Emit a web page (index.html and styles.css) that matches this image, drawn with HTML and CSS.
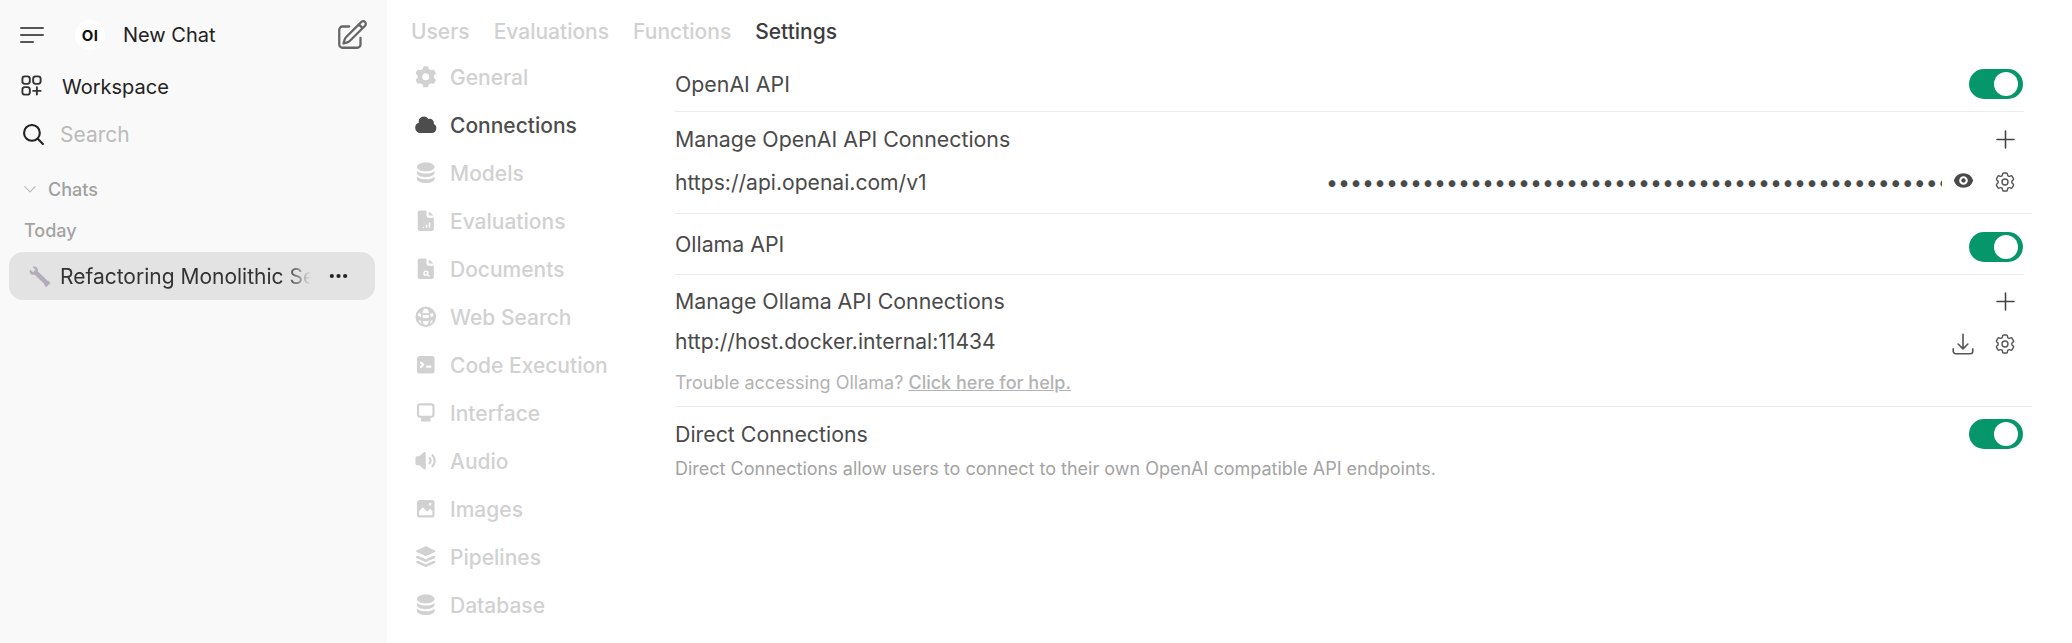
FILE: index.html
```html
<!DOCTYPE html>
<html lang="en">
<head>
<meta charset="utf-8">
<title>Admin Settings</title>
<link rel="stylesheet" href="styles.css">
</head>
<body>
<div class="app">
  <aside class="sidebar">
    <div class="side-top">
      <svg class="i-menu" viewBox="0 0 24 24" fill="none" stroke="currentColor" stroke-width="2" stroke-linecap="round"><path d="M1 5h22M1 12h22M1 19h12"/></svg>
      <span class="logo">OI</span>
      <span class="new-chat">New Chat</span>
      <svg class="i-new" viewBox="0 0 24 24" fill="none" stroke="currentColor" stroke-width="1.600" stroke-linecap="round" stroke-linejoin="round"><path d="m16.862 4.487 1.687-1.688a1.875 1.875 0 1 1 2.652 2.652L10.582 16.070a4.500 4.500 0 0 1-1.897 1.130L6 18l.8-2.685a4.500 4.500 0 0 1 1.130-1.897l8.932-8.931Zm0 0L19.500 7.125M18 14v4.750A2.250 2.250 0 0 1 15.750 21H5.250A2.250 2.250 0 0 1 3 18.750V8.250A2.250 2.250 0 0 1 5.250 6H10"/></svg>
    </div>
    <div class="side-workspace">
      <svg class="i-work" viewBox="2.500 2.500 19 19" fill="none" stroke="currentColor" stroke-width="1.700" stroke-linecap="round" stroke-linejoin="round"><path d="M13.500 16.875h3.375m0 0h3.375m-3.375 0V13.500m0 3.375v3.375M6 10.500h2.250a2.250 2.250 0 0 0 2.250-2.250V6a2.250 2.250 0 0 0-2.250-2.250H6A2.250 2.250 0 0 0 3.750 6v2.250A2.250 2.250 0 0 0 6 10.500Zm0 9.750h2.250A2.250 2.250 0 0 0 10.500 18v-2.250a2.250 2.250 0 0 0-2.250-2.250H6a2.250 2.250 0 0 0-2.250 2.250V18A2.250 2.250 0 0 0 6 20.250Zm9.750-9.750H18a2.250 2.250 0 0 0 2.250-2.250V6A2.250 2.250 0 0 0 18 3.750h-2.250A2.250 2.250 0 0 0 13.500 6v2.250a2.250 2.250 0 0 0 2.250 2.250Z"/></svg>
      <span>Workspace</span>
    </div>
    <div class="side-search">
      <svg class="i-search" viewBox="2 2 20 20" fill="none" stroke="currentColor" stroke-width="2" stroke-linecap="round" stroke-linejoin="round"><path d="m21 21-5.197-5.197m0 0A7.500 7.500 0 1 0 5.196 5.196a7.500 7.500 0 0 0 10.607 10.607Z"/></svg>
      <span>Search</span>
    </div>
    <div class="side-chats">
      <svg class="i-chev" viewBox="0 0 24 24" fill="none" stroke="currentColor" stroke-width="2" stroke-linecap="round" stroke-linejoin="round"><path d="m3 8 9 9 9-9"/></svg>
      <span>Chats</span>
    </div>
    <div class="side-today">Today</div>
    <div class="chat-item">
      <svg class="i-wrench" viewBox="0 0 24 24"><path d="M2.200 4.600 5.300 7.600 7.800 5 4.700 2C7 .8 9.600 2 10.200 4.300c.2.800.1 1.500-.1 2.200l10.300 10 .6-.2 2.400 2.500-4.300 4.300-2.400-2.500.3-.7L6.700 10c-.7.2-1.500.3-2.300.1C2 9.400 1 6.800 2.200 4.600Z"/></svg>
      <span class="chat-title">Refactoring Monolithic Server</span>
      <svg class="i-dots" viewBox="0 0 20 6" fill="currentColor"><circle cx="3" cy="3" r="2.200"/><circle cx="10" cy="3" r="2.200"/><circle cx="17" cy="3" r="2.200"/></svg>
    </div>
  </aside>

  <main class="main">
    <nav class="tabs">
      <span class="tab">Users</span>
      <span class="tab">Evaluations</span>
      <span class="tab">Functions</span>
      <span class="tab tab-on">Settings</span>
    </nav>
    <div class="panes">
      <ul class="nav">
        <li class="nav-item"><svg viewBox="0 0 20 20" fill="currentColor"><path fill-rule="evenodd" d="M7.840 1.804A1 1 0 0 1 8.820 1h2.360a1 1 0 0 1 .98.804l.331 1.652a6.993 6.993 0 0 1 1.929 1.115l1.598-.54a1 1 0 0 1 1.186.447l1.180 2.044a1 1 0 0 1-.205 1.251l-1.267 1.113a7.047 7.047 0 0 1 0 2.228l1.267 1.113a1 1 0 0 1 .206 1.250l-1.180 2.045a1 1 0 0 1-1.187.447l-1.598-.54a6.993 6.993 0 0 1-1.929 1.115l-.33 1.652a1 1 0 0 1-.98.804H8.820a1 1 0 0 1-.98-.804l-.331-1.652a6.993 6.993 0 0 1-1.929-1.115l-1.598.54a1 1 0 0 1-1.186-.447l-1.180-2.044a1 1 0 0 1 .205-1.251l1.267-1.114a7.050 7.050 0 0 1 0-2.227L1.821 7.773a1 1 0 0 1-.206-1.250l1.180-2.045a1 1 0 0 1 1.187-.447l1.598.54A6.992 6.992 0 0 1 7.510 3.456l.33-1.652ZM10 13a3 3 0 1 0 0-6 3 3 0 0 0 0 6Z" clip-rule="evenodd"/></svg>General</li>
        <li class="nav-item nav-on"><svg viewBox="0 0 20 20" fill="currentColor"><path d="M1 12.500A4.500 4.500 0 0 0 5.500 17H15a4 4 0 0 0 1.866-7.539 3.504 3.504 0 0 0-4.504-4.272A4.500 4.500 0 0 0 4.060 8.235 4.502 4.502 0 0 0 1 12.500Z"/></svg>Connections</li>
        <li class="nav-item"><svg viewBox="0 0 16 16" fill="currentColor"><path d="M8 7c3.314 0 6-1.343 6-3s-2.686-3-6-3-6 1.343-6 3 2.686 3 6 3Z"/><path d="M8 8.500c1.840 0 3.579-.37 4.914-1.037A6.330 6.330 0 0 0 14 6.790V8c0 1.657-2.686 3-6 3S2 9.657 2 8V6.790c.320.260.686.484 1.086.673C4.421 8.130 6.160 8.500 8 8.500Z"/><path d="M8 12.500c1.840 0 3.579-.37 4.914-1.037.4-.189.766-.413 1.086-.673V12c0 1.657-2.686 3-6 3s-6-1.343-6-3v-1.210c.32.260.686.484 1.086.673C4.421 12.130 6.160 12.500 8 12.500Z"/></svg>Models</li>
        <li class="nav-item"><svg viewBox="0 0 16 16" fill="currentColor"><path fill-rule="evenodd" d="M4 1a1.500 1.500 0 0 0-1.500 1.500v11A1.500 1.500 0 0 0 4 15h8a1.500 1.500 0 0 0 1.500-1.500V6h-3A2 2 0 0 1 8.500 4V1H4Zm6 .5V4a.5.500 0 0 0 .5.500h2.800L10 1.500ZM6 12.500a.5.500 0 0 1 1 0 .5.500 0 0 1-1 0Zm2-1.500a.5.500 0 0 1 1 0v1.500a.5.500 0 0 1-1 0V11Zm2-1.500a.5.500 0 0 1 1 0v3a.5.500 0 0 1-1 0v-3Z" clip-rule="evenodd"/></svg>Evaluations</li>
        <li class="nav-item"><svg viewBox="0 0 16 16" fill="currentColor"><path fill-rule="evenodd" d="M4 1a1.500 1.500 0 0 0-1.500 1.500v11A1.500 1.500 0 0 0 4 15h8a1.500 1.500 0 0 0 1.500-1.500V6h-3A2 2 0 0 1 8.500 4V1H4Zm6 .5V4a.5.500 0 0 0 .5.500h2.800L10 1.500ZM8 12.800a1.800 1.800 0 0 0 1-.3l.9.9a.5.500 0 0 0 .7-.7l-.9-.9A1.800 1.800 0 1 0 8 12.800Zm0-1a.8.8 0 1 0 0-1.600.8.8 0 0 0 0 1.600Z" clip-rule="evenodd"/></svg>Documents</li>
        <li class="nav-item"><svg viewBox="0 0 16 16" fill="currentColor"><path fill-rule="evenodd" d="M8 1a7 7 0 1 0 0 14A7 7 0 0 0 8 1ZM6.900 2.700c-.5.700-.9 1.600-1.200 2.700.7.200 1.500.3 2.300.3s1.600-.1 2.300-.3c-.3-1.100-.7-2-1.200-2.700-.4-.1-.7-.2-1.100-.2s-.7.1-1.100.2ZM2.600 7.200c.6.500 1.300.8 2 1.100.1-.8.200-1.500.4-2.100-.7-.3-1.200-.6-1.700-1-.3.600-.6 1.300-.7 2Zm3.500-.6c-.1.700-.2 1.400-.2 2.100.7.200 1.400.300 2.100.300s1.400-.1 2.100-.300c0-.7-.1-1.400-.2-2.100-.6.100-1.300.2-1.900.2s-1.300-.1-1.900-.2Zm4.900-.4c.2.600.3 1.300.4 2.100.7-.3 1.400-.6 2-1.100-.1-.7-.4-1.400-.7-2-.5.4-1 .7-1.700 1ZM3.100 10.600c.4 1 1.100 1.700 2 2.300-.2-.7-.4-1.500-.5-2.300l-1.500 0Zm2.800.2c.1.800.300 1.700.7 2.400.5.2.9.3 1.400.3s.9-.1 1.400-.3c.4-.7.600-1.600.7-2.400-1.400.3-2.800.3-4.200 0Zm5.500-.2c-.1.800-.3 1.600-.5 2.300.9-.6 1.600-1.300 2-2.300h-1.500Z" clip-rule="evenodd"/></svg>Web Search</li>
        <li class="nav-item"><svg viewBox="0 0 16 16" fill="currentColor"><path fill-rule="evenodd" d="M2 4a2 2 0 0 1 2-2h8a2 2 0 0 1 2 2v8a2 2 0 0 1-2 2H4a2 2 0 0 1-2-2V4Zm2.220 1.970a.750.750 0 0 0 0 1.060l.970.970-.970.970a.750.750 0 1 0 1.060 1.060l1.500-1.500a.750.750 0 0 0 0-1.060l-1.500-1.500a.750.750 0 0 0-1.060 0ZM8.750 8.500a.750.750 0 0 0 0 1.500h2.500a.750.750 0 0 0 0-1.500h-2.500Z" clip-rule="evenodd"/></svg>Code Execution</li>
        <li class="nav-item"><svg viewBox="0 0 16 16" fill="currentColor"><path fill-rule="evenodd" d="M2 3.750A2.250 2.250 0 0 1 4.250 1.500h7.500A2.250 2.250 0 0 1 14 3.750v5.500a2.250 2.250 0 0 1-2.250 2.250H11c0 .5.100.9.300 1.200.2.300.2 1.300-.6 1.300H5.300c-.8 0-.8-1-.6-1.300.2-.3.3-.7.300-1.200h-.75A2.250 2.250 0 0 1 2 9.250v-5.500Zm2.250-.750a.75.75 0 0 0-.75.750v5.500c0 .414.336.750.750.750h7.500a.75.75 0 0 0 .75-.750v-5.500a.75.75 0 0 0-.75-.750h-7.500Z" clip-rule="evenodd"/></svg>Interface</li>
        <li class="nav-item"><svg viewBox="0 0 16 16" fill="currentColor"><path d="M7.557 2.066A.75.75 0 0 1 8 2.750v10.500a.75.75 0 0 1-1.248.560L3.590 11H2a1 1 0 0 1-1-1V6a1 1 0 0 1 1-1h1.590l3.162-2.810a.75.75 0 0 1 .805-.124ZM12.100 3.750a.75.75 0 0 1 1.060 0 6.250 6.250 0 0 1 0 8.500.75.75 0 1 1-1.060-1.060 4.750 4.750 0 0 0 0-6.380.75.75 0 0 1 0-1.060ZM10.100 5.750a.75.75 0 0 1 1.060 0 3.250 3.250 0 0 1 0 4.500.75.75 0 1 1-1.060-1.060 1.750 1.750 0 0 0 0-2.380.75.75 0 0 1 0-1.060Z"/></svg>Audio</li>
        <li class="nav-item"><svg viewBox="0 0 16 16" fill="currentColor"><path fill-rule="evenodd" d="M2 4a2 2 0 0 1 2-2h8a2 2 0 0 1 2 2v8a2 2 0 0 1-2 2H4a2 2 0 0 1-2-2V4Zm10.500 5.707a.5.500 0 0 0-.146-.353l-1-1a.5.500 0 0 0-.708 0L9.354 9.646a.5.500 0 0 1-.708 0L6.354 7.354a.5.500 0 0 0-.708 0l-2 2a.5.500 0 0 0-.146.353V12a.5.500 0 0 0 .5.500h8a.5.500 0 0 0 .5-.5V9.707ZM12 5a1 1 0 1 1-2 0 1 1 0 0 1 2 0Z" clip-rule="evenodd"/></svg>Images</li>
        <li class="nav-item"><svg viewBox="0 0 20 20" fill="currentColor"><path d="M9.680 1.100a.75.75 0 0 1 .640 0l7.500 3.500a.75.75 0 0 1 0 1.360l-7.500 3.500a.75.75 0 0 1-.640 0l-7.500-3.500a.75.75 0 0 1 0-1.360l7.500-3.500Z"/><path d="m3.400 9.100 6 2.800a1.500 1.500 0 0 0 1.200 0l6-2.800 1.220.570a.75.75 0 0 1 0 1.360l-7.500 3.500a.75.75 0 0 1-.640 0l-7.500-3.500a.75.75 0 0 1 0-1.360L3.400 9.100Z"/><path d="m3.400 13.300 6 2.800a1.500 1.500 0 0 0 1.200 0l6-2.800 1.220.570a.75.75 0 0 1 0 1.360l-7.500 3.500a.75.75 0 0 1-.640 0l-7.500-3.500a.75.75 0 0 1 0-1.360l1.220-.570Z"/></svg>Pipelines</li>
        <li class="nav-item"><svg viewBox="0 0 16 16" fill="currentColor"><path d="M8 7c3.314 0 6-1.343 6-3s-2.686-3-6-3-6 1.343-6 3 2.686 3 6 3Z"/><path d="M8 8.500c1.840 0 3.579-.37 4.914-1.037A6.330 6.330 0 0 0 14 6.790V8c0 1.657-2.686 3-6 3S2 9.657 2 8V6.790c.320.260.686.484 1.086.673C4.421 8.130 6.160 8.500 8 8.500Z"/><path d="M8 12.500c1.840 0 3.579-.37 4.914-1.037.4-.189.766-.413 1.086-.673V12c0 1.657-2.686 3-6 3s-6-1.343-6-3v-1.210c.32.260.686.484 1.086.673C4.421 12.130 6.160 12.500 8 12.500Z"/></svg>Database</li>
      </ul>

      <section class="content">
        <div class="row row-a">
          <span class="label">OpenAI API</span>
          <span class="toggle"><span class="knob"></span></span>
        </div>
        <hr class="rule rule-short">
        <div class="row row-b">
          <span class="label">Manage OpenAI API Connections</span>
          <svg class="i-plus" viewBox="0 0 16 16" fill="none" stroke="currentColor" stroke-width="1.200" stroke-linecap="round"><path d="M8 1.500v13M1.500 8h13"/></svg>
        </div>
        <div class="row row-c">
          <input class="url" type="text" value="https://api.openai.com/v1" aria-label="API URL">
          <input class="key" type="password" value="sk-proj-aaaaaaaaaaaaaaaaaaaaaaaaaaaaaaaaaaaaaaaaaaaaaaaaaaaaaaaaaaaaaaaaaaaaaaaa" aria-label="API key">
          <svg class="i-eye" viewBox="0 0 16 16" fill="currentColor"><path d="M8 9.500a1.500 1.500 0 1 0 0-3 1.500 1.500 0 0 0 0 3Z"/><path fill-rule="evenodd" d="M1.380 8.280a.87.87 0 0 1 0-.566 7.003 7.003 0 0 1 13.238.006.87.87 0 0 1 0 .566A7.003 7.003 0 0 1 1.379 8.280ZM11 8a3 3 0 1 1-6 0 3 3 0 0 1 6 0Z" clip-rule="evenodd"/></svg>
          <svg class="i-cog" viewBox="0 0 24 24" fill="none" stroke="currentColor" stroke-width="1.400" stroke-linecap="round" stroke-linejoin="round"><path d="M9.594 3.940c.09-.542.56-.94 1.110-.94h2.593c.55 0 1.020.398 1.110.94l.213 1.281c.063.374.313.686.645.870.074.040.147.083.22.127.325.196.72.257 1.075.124l1.217-.456a1.125 1.125 0 0 1 1.370.490l1.296 2.247a1.125 1.125 0 0 1-.26 1.431l-1.003.827c-.293.241-.438.613-.43.992a7.723 7.723 0 0 1 0 .255c-.008.378.137.750.43.991l1.004.827c.424.350.534.955.26 1.430l-1.298 2.247a1.125 1.125 0 0 1-1.369.491l-1.217-.456c-.355-.133-.75-.072-1.076.124a6.470 6.470 0 0 1-.22.128c-.331.183-.581.495-.644.869l-.213 1.281c-.09.543-.56.940-1.110.940h-2.594c-.55 0-1.019-.398-1.110-.940l-.213-1.281c-.062-.374-.312-.686-.644-.870a6.520 6.520 0 0 1-.22-.127c-.325-.196-.72-.257-1.076-.124l-1.217.456a1.125 1.125 0 0 1-1.369-.490l-1.297-2.247a1.125 1.125 0 0 1 .26-1.431l1.004-.827c.292-.240.437-.613.430-.991a6.932 6.932 0 0 1 0-.255c.007-.380-.138-.751-.43-.992l-1.004-.827a1.125 1.125 0 0 1-.26-1.430l1.297-2.247a1.125 1.125 0 0 1 1.370-.491l1.216.456c.356.133.751.072 1.076-.124.072-.044.146-.086.22-.128.332-.183.582-.495.644-.869l.214-1.280Z"/><path d="M15 12a3 3 0 1 1-6 0 3 3 0 0 1 6 0Z"/></svg>
        </div>
        <hr class="rule">
        <div class="row row-d">
          <span class="label label-up">Ollama API</span>
          <span class="toggle"><span class="knob"></span></span>
        </div>
        <hr class="rule rule-short">
        <div class="row row-e">
          <span class="label">Manage Ollama API Connections</span>
          <svg class="i-plus" viewBox="0 0 16 16" fill="none" stroke="currentColor" stroke-width="1.200" stroke-linecap="round"><path d="M8 1.500v13M1.500 8h13"/></svg>
        </div>
        <div class="row row-f">
          <input class="url url-wide" type="text" value="http://host.docker.internal:11434" aria-label="Ollama URL">
          <svg class="i-tray" viewBox="0 0 24 24" fill="none" stroke="currentColor" stroke-width="1.500" stroke-linecap="round" stroke-linejoin="round"><path d="M3 16.500v2.250A2.250 2.250 0 0 0 5.250 21h13.500A2.250 2.250 0 0 0 21 18.750V16.500M16.500 12 12 16.500m0 0L7.500 12m4.500 4.500V3"/></svg>
          <svg class="i-cog i-cog-near" viewBox="0 0 24 24" fill="none" stroke="currentColor" stroke-width="1.400" stroke-linecap="round" stroke-linejoin="round"><path d="M9.594 3.940c.09-.542.56-.94 1.110-.94h2.593c.55 0 1.020.398 1.110.94l.213 1.281c.063.374.313.686.645.870.074.040.147.083.22.127.325.196.72.257 1.075.124l1.217-.456a1.125 1.125 0 0 1 1.370.490l1.296 2.247a1.125 1.125 0 0 1-.26 1.431l-1.003.827c-.293.241-.438.613-.43.992a7.723 7.723 0 0 1 0 .255c-.008.378.137.750.43.991l1.004.827c.424.350.534.955.26 1.430l-1.298 2.247a1.125 1.125 0 0 1-1.369.491l-1.217-.456c-.355-.133-.75-.072-1.076.124a6.470 6.470 0 0 1-.22.128c-.331.183-.581.495-.644.869l-.213 1.281c-.09.543-.56.940-1.110.940h-2.594c-.55 0-1.019-.398-1.110-.940l-.213-1.281c-.062-.374-.312-.686-.644-.870a6.520 6.520 0 0 1-.22-.127c-.325-.196-.72-.257-1.076-.124l-1.217.456a1.125 1.125 0 0 1-1.369-.490l-1.297-2.247a1.125 1.125 0 0 1 .26-1.431l1.004-.827c.292-.240.437-.613.430-.991a6.932 6.932 0 0 1 0-.255c.007-.380-.138-.751-.43-.992l-1.004-.827a1.125 1.125 0 0 1-.26-1.430l1.297-2.247a1.125 1.125 0 0 1 1.370-.491l1.216.456c.356.133.751.072 1.076-.124.072-.044.146-.086.22-.128.332-.183.582-.495.644-.869l.214-1.280Z"/><path d="M15 12a3 3 0 1 1-6 0 3 3 0 0 1 6 0Z"/></svg>
        </div>
        <div class="row row-g">
          <span class="hint">Trouble accessing Ollama? <a class="help" href="#">Click here for help.</a></span>
        </div>
        <hr class="rule">
        <div class="row row-h">
          <span class="label">Direct Connections</span>
          <span class="toggle"><span class="knob"></span></span>
        </div>
        <div class="row row-i">
          <span class="desc">Direct Connections allow users to connect to their own OpenAI compatible API endpoints.</span>
        </div>
      </section>
    </div>
  </main>
</div>
</body>
</html>
```

FILE: styles.css
```css
* { box-sizing: border-box; }
html, body { margin: 0; height: 100%; }
body {
  font-family: Inter, "Liberation Sans", sans-serif;
  font-size: 21.33px;
  color: #4a4a4a;
  background: #fff;
  overflow: hidden;
}
.app { display: flex; height: 643px; }

/* sidebar */
.sidebar {
  width: 387px;
  flex: none;
  background: #f9f9f9;
  display: flex;
  flex-direction: column;
}
.side-top { display: flex; align-items: center; height: 70px; padding: 0 18px 0 20px; flex: none; }
.i-menu { width: 24px; height: 24px; color: #555; flex: none; }
.logo {
  width: 30px; height: 30px; margin-left: 31px; flex: none;
  border-radius: 50%; background: #fff; color: #111;
  display: flex; align-items: center; justify-content: center;
  font-size: 15px; font-weight: 700; letter-spacing: .4px;
}
.new-chat { margin-left: 18px; color: #222; font-size: 20px; font-weight: 400; flex: 1; }
.i-new { width: 34px; height: 34px; color: #666; flex: none; }
.side-workspace { display: flex; align-items: center; height: 34px; padding-left: 21px; color: #222; font-size: 20px; font-weight: 400; flex: none; }
.i-work { width: 21px; height: 21px; margin-right: 20px; color: #333; position: relative; top: -2px; }
.side-search { display: flex; align-items: center; height: 60px; padding-left: 23px; color: #bbb; flex: none; font-size: 21px; }
.i-search { width: 21px; height: 21px; margin-right: 16px; color: #222; }
.side-chats { display: flex; align-items: center; height: 50px; padding-left: 23px; font-size: 18px; font-weight: 500; color: #a0a0a0; flex: none; }
.i-chev { width: 14px; height: 14px; margin-right: 11px; color: #bbb; }
.side-today { height: 28px; line-height: 28px; margin-top: 3px; padding-left: 24px; font-size: 18px; font-weight: 500; color: #a3a3a3; flex: none; }
.chat-item {
  display: flex; align-items: center;
  margin: 7px 12px 0 9px; height: 48px; flex: none;
  padding: 0 27px 0 19px;
  border-radius: 14px;
  background: #e3e3e3;
  color: #333;
}
.i-wrench { width: 23px; height: 23px; margin-right: 9px; flex: none; fill: #b3adba; }
.chat-title {
  flex: 1; min-width: 0; white-space: nowrap; overflow: hidden; margin-right: 18px; font-size: 21px;
  -webkit-mask-image: linear-gradient(to right, #000 90%, transparent 100%);
  mask-image: linear-gradient(to right, #000 90%, transparent 100%);
}
.i-dots { width: 19px; height: 6px; flex: none; color: #222; }

/* main */
.main { flex: 1; min-width: 0; display: flex; flex-direction: column; padding: 0 40px 0 24px; }
.tabs { display: flex; gap: 24px; height: 56px; padding: 20px 0 0 0; flex: none; font-size: 21px; font-weight: 500; }
.tab { color: #d1d1d1; line-height: 24px; }
.tab-on { color: #3d3d3d; }
.panes { display: flex; flex: 1; min-height: 0; }
.nav { list-style: none; margin: -3px 0 0; padding: 0; width: 264px; flex: none; }
.nav-item { display: flex; align-items: center; height: 48px; padding-left: 3px; color: #d1d1d1; font-size: 21px; font-weight: 500; }
.nav-item svg { width: 23.500px; height: 23.500px; margin-right: 12.500px; flex: none; }
.nav-on { color: #4d4d4d; }

.content { flex: 1; min-width: 0; }
.row { display: flex; align-items: center; justify-content: space-between; }
.label { color: #4a4a4a; font-weight: 400; }
.label-up { position: relative; top: -3px; }
.row-a { height: 54px; padding-right: 9px; margin-top: 1px; }
.row-b { height: 54px; padding-right: 16px; }
.row-c { height: 47px; padding: 3px 15px 0 0; align-items: flex-start; }
.row-d { height: 60px; padding: 6px 9px 0 0; }
.row-e { height: 52px; padding-right: 16px; }
.row-f { height: 34px; padding-right: 15px; }
.row-f .url { margin-top: -6px; }
.row-g { height: 45px; padding-bottom: 3px; }
.row-h { height: 54px; padding-right: 9px; }
.row-i { height: 20px; margin-top: -3px; }
.rule { height: 1px; border: 0; margin: 0; background: #ececec; }
.rule-short { margin-right: 8px; }
.toggle { width: 54px; height: 30px; border-radius: 15px; background: #059669; display: flex; align-items: center; justify-content: flex-end; padding-right: 5px; flex: none; }
.knob { width: 24px; height: 24px; border-radius: 50%; background: #fff; }
.i-plus { width: 21px; height: 21px; color: #444; flex: none; }
.url, .key {
  border: 0; outline: 0; background: transparent; padding: 0; margin: 0;
  font: inherit; color: #4a4a4a; height: 26px; min-width: 0;
}
.url { width: 651px; flex: none; font-size: 21.100px; }
.url-wide { flex: 1; width: auto; }
.key { flex: 1; }
.i-eye { width: 23px; height: 23px; margin-left: 10px; color: #4a4a4a; flex: none; }
.i-tray { width: 26px; height: 26px; color: #555; flex: none; }
.i-cog { width: 24px; height: 24px; margin-left: 18px; margin-top: 1px; color: #555; flex: none; }
.i-cog-near { margin: 0 0 0 17px; }
.hint { font-size: 18px; color: #b3b3b3; }
.help { color: #b3b3b3; font-weight: 500; text-decoration: underline; }
.desc { font-size: 18px; color: #a3a3a3; }
```
